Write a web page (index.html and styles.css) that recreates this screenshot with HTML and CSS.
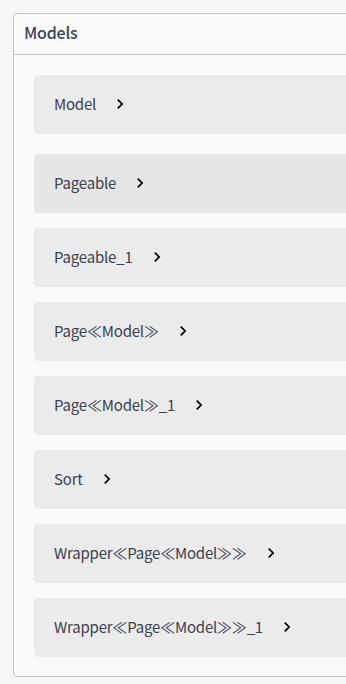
FILE: index.html
```html
<!DOCTYPE html>
<html lang="en">
<head>
    <meta charset="UTF-8">
    <meta name="viewport" content="width=device-width, initial-scale=1.0">
    <title>Models</title>
    <link rel="stylesheet" href="styles.css">
</head>
<body>
    <div class="wrapper">
        <section class="models">
            <h4>Models</h4>
            <div class="model-list">
                <div class="model-container">
                    <span class="model-title">Model</span>
                    <svg class="model-toggle" viewBox="0 0 24 24"><path d="M10 6L8.59 7.41 13.17 12l-4.58 4.59L10 18l6-6z"/></svg>
                </div>
                <div class="model-container hovered">
                    <span class="model-title">Pageable</span>
                    <svg class="model-toggle" viewBox="0 0 24 24"><path d="M10 6L8.59 7.41 13.17 12l-4.58 4.59L10 18l6-6z"/></svg>
                </div>
                <div class="model-container">
                    <span class="model-title">Pageable_1</span>
                    <svg class="model-toggle" viewBox="0 0 24 24"><path d="M10 6L8.59 7.41 13.17 12l-4.58 4.59L10 18l6-6z"/></svg>
                </div>
                <div class="model-container">
                    <span class="model-title">Page≪Model≫</span>
                    <svg class="model-toggle" viewBox="0 0 24 24"><path d="M10 6L8.59 7.41 13.17 12l-4.58 4.59L10 18l6-6z"/></svg>
                </div>
                <div class="model-container">
                    <span class="model-title">Page≪Model≫_1</span>
                    <svg class="model-toggle" viewBox="0 0 24 24"><path d="M10 6L8.59 7.41 13.17 12l-4.58 4.59L10 18l6-6z"/></svg>
                </div>
                <div class="model-container">
                    <span class="model-title">Sort</span>
                    <svg class="model-toggle" viewBox="0 0 24 24"><path d="M10 6L8.59 7.41 13.17 12l-4.58 4.59L10 18l6-6z"/></svg>
                </div>
                <div class="model-container">
                    <span class="model-title">Wrapper≪Page≪Model≫≫</span>
                    <svg class="model-toggle" viewBox="0 0 24 24"><path d="M10 6L8.59 7.41 13.17 12l-4.58 4.59L10 18l6-6z"/></svg>
                </div>
                <div class="model-container">
                    <span class="model-title">Wrapper≪Page≪Model≫≫_1</span>
                    <svg class="model-toggle" viewBox="0 0 24 24"><path d="M10 6L8.59 7.41 13.17 12l-4.58 4.59L10 18l6-6z"/></svg>
                </div>
            </div>
        </section>
    </div>
</body>
</html>
```

FILE: styles.css
```css
html, body {
    margin: 0;
    background: #f7f7f7;
    overflow-x: hidden;
}

body {
    color: #3b4151;
    font-family: "Noto Sans CJK KR", "Noto Sans", sans-serif;
}

.wrapper {
    padding: 13px 0 0 13px;
}

.models {
    width: 600px;
    background: #fafafa;
    border: 1px solid #c4c5c9;
    border-radius: 4px;
}

.models h4 {
    margin: 0;
    padding: 8px 20px 12px 10px;
    font-size: 16px;
    line-height: 20px;
    font-weight: 500;
    letter-spacing: -0.2px;
    border-bottom: 1px solid #c4c5c9;
}

.model-list {
    padding: 20px 0 4px;
}

.model-container {
    display: flex;
    align-items: center;
    margin: 0 20px 15px;
    padding: 18px 20px 20px;
    line-height: 21px;
    background: #ebebeb;
    border-radius: 4px;
}

.model-container:first-child {
    margin-bottom: 20px;
}

.model-container.hovered {
    background: #e6e6e6;
}

.model-title {
    font-size: 15px;
    letter-spacing: -0.2px;
}

.model-toggle {
    width: 20px;
    height: 20px;
    margin-left: 14px;
    fill: #000;
}
```
